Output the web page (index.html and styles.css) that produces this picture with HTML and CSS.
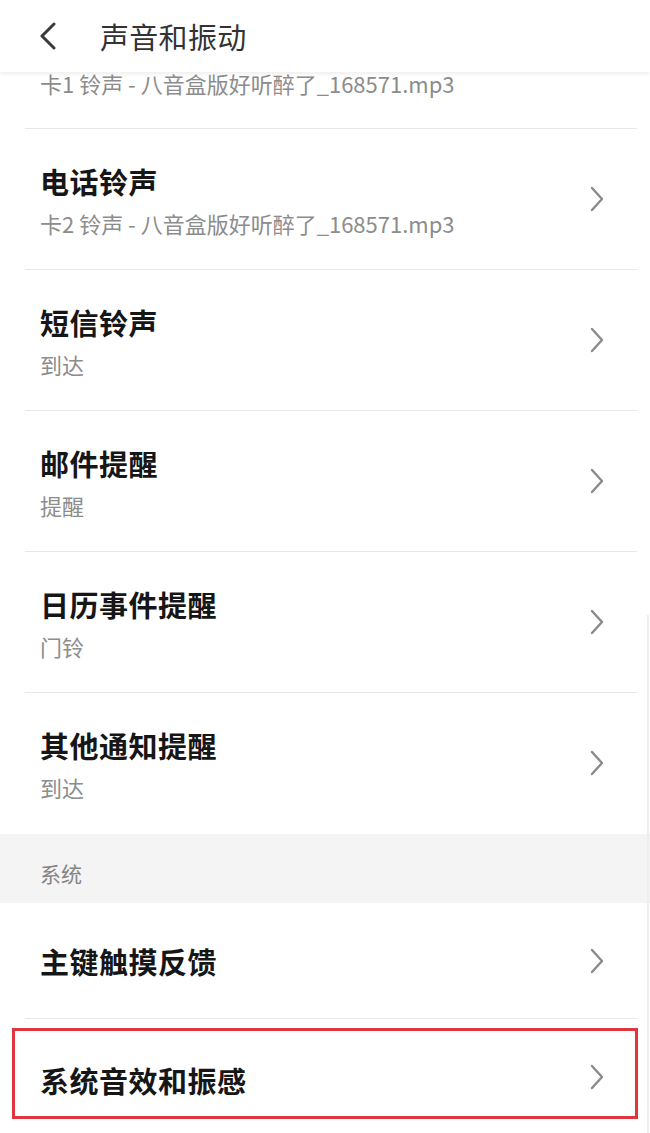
FILE: index.html
```html
<!DOCTYPE html>
<html lang="zh-CN">
<head>
<meta charset="utf-8">
<title>声音和振动</title>
<link rel="stylesheet" href="styles.css">
</head>
<body>
<div class="page">
  <header class="header">
    <svg class="back" viewBox="0 0 24 28" width="24" height="28" aria-hidden="true">
      <polyline points="18,2 6,14 18,26" fill="none" stroke="#3a3a3a" stroke-width="3" stroke-linecap="round" stroke-linejoin="round"/>
    </svg>
    <span class="header-title">声音和振动</span>
  </header>

  <div class="partial">
    <div class="sub">卡1 铃声 - 八音盒版好听醉了_168571.mp3</div>
  </div>

  <div class="row two">
    <div class="text">
      <div class="title">电话铃声</div>
      <div class="sub">卡2 铃声 - 八音盒版好听醉了_168571.mp3</div>
    </div>
    <svg class="chev" viewBox="0 0 16 26" width="16" height="26" aria-hidden="true"><polyline points="3,2 13,13 3,24" fill="none" stroke="#8a8a8a" stroke-width="2.4" stroke-linecap="round" stroke-linejoin="round"/></svg>
  </div>

  <div class="row two">
    <div class="text">
      <div class="title">短信铃声</div>
      <div class="sub">到达</div>
    </div>
    <svg class="chev" viewBox="0 0 16 26" width="16" height="26" aria-hidden="true"><polyline points="3,2 13,13 3,24" fill="none" stroke="#8a8a8a" stroke-width="2.4" stroke-linecap="round" stroke-linejoin="round"/></svg>
  </div>

  <div class="row two">
    <div class="text">
      <div class="title">邮件提醒</div>
      <div class="sub">提醒</div>
    </div>
    <svg class="chev" viewBox="0 0 16 26" width="16" height="26" aria-hidden="true"><polyline points="3,2 13,13 3,24" fill="none" stroke="#8a8a8a" stroke-width="2.4" stroke-linecap="round" stroke-linejoin="round"/></svg>
  </div>

  <div class="row two">
    <div class="text">
      <div class="title">日历事件提醒</div>
      <div class="sub">门铃</div>
    </div>
    <svg class="chev" viewBox="0 0 16 26" width="16" height="26" aria-hidden="true"><polyline points="3,2 13,13 3,24" fill="none" stroke="#8a8a8a" stroke-width="2.4" stroke-linecap="round" stroke-linejoin="round"/></svg>
  </div>

  <div class="row two last-in-group">
    <div class="text">
      <div class="title">其他通知提醒</div>
      <div class="sub">到达</div>
    </div>
    <svg class="chev" viewBox="0 0 16 26" width="16" height="26" aria-hidden="true"><polyline points="3,2 13,13 3,24" fill="none" stroke="#8a8a8a" stroke-width="2.4" stroke-linecap="round" stroke-linejoin="round"/></svg>
  </div>

  <div class="section">系统</div>

  <div class="row one">
    <div class="title">主键触摸反馈</div>
    <svg class="chev" viewBox="0 0 16 26" width="16" height="26" aria-hidden="true"><polyline points="3,2 13,13 3,24" fill="none" stroke="#8a8a8a" stroke-width="2.4" stroke-linecap="round" stroke-linejoin="round"/></svg>
  </div>

  <div class="row one highlight last-in-group">
    <div class="title">系统音效和振感</div>
    <svg class="chev" viewBox="0 0 16 26" width="16" height="26" aria-hidden="true"><polyline points="3,2 13,13 3,24" fill="none" stroke="#8a8a8a" stroke-width="2.4" stroke-linecap="round" stroke-linejoin="round"/></svg>
    <div class="mark"></div>
  </div>

  <div class="scrollbar"></div>
</div>
</body>
</html>
```

FILE: styles.css
```css
html, body {
  margin: 0;
  padding: 0;
  background: #ffffff;
}

body {
  font-family: "Noto Sans CJK SC", "Noto Sans", sans-serif;
  color: #1a1a1a;
}

.page {
  position: relative;
  width: 650px;
  height: 1133px;
  overflow: hidden;
  background: #ffffff;
}

.header {
  position: relative;
  z-index: 2;
  height: 72px;
  display: flex;
  align-items: center;
  padding-left: 36px;
  background: #ffffff;
  box-shadow: 0 2px 4px rgba(0, 0, 0, 0.07);
}

.back {
  flex: none;
  margin-right: 40px;
}

.header-title {
  font-size: 29px;
  line-height: 36px;
  color: #333333;
  font-weight: 400;
  letter-spacing: 0.3px;
}

.partial {
  height: 57px;
  padding-left: 40px;
  box-sizing: border-box;
  position: relative;
}

.partial .sub {
  line-height: 22px;
}

.partial::after,
.row::after {
  content: "";
  position: absolute;
  left: 25px;
  right: 13px;
  bottom: 0;
  height: 1px;
  background: #e8e8e8;
}

.row {
  position: relative;
  display: flex;
  align-items: center;
  justify-content: space-between;
  padding: 0 45px 0 40px;
  box-sizing: border-box;
}

.row.two {
  height: 141px;
  padding-bottom: 1px;
}

.row.one {
  height: 116px;
  padding-bottom: 1px;
}

.row.last-in-group::after {
  display: none;
}

.text {
  display: flex;
  flex-direction: column;
  gap: 11px;
}

.title {
  font-size: 29px;
  line-height: 36px;
  font-weight: 700;
  color: #161616;
  letter-spacing: 0.5px;
}

.sub {
  font-size: 22px;
  line-height: 26px;
  color: #8c8c8c;
}

.chev {
  flex: none;
}

.section {
  height: 69px;
  box-sizing: border-box;
  padding: 26px 0 0 40px;
  background: #f4f4f4;
  font-size: 21px;
  line-height: 26px;
  color: #858585;
}

.highlight .title {
  margin-top: 6px;
}

.mark {
  position: absolute;
  left: 12px;
  top: 9px;
  width: 626px;
  height: 91px;
  box-sizing: border-box;
  border: 3px solid #e0353d;
  pointer-events: none;
}

.scrollbar {
  position: absolute;
  right: 1px;
  top: 615px;
  width: 2px;
  height: 518px;
  background: #ededed;
}
```
